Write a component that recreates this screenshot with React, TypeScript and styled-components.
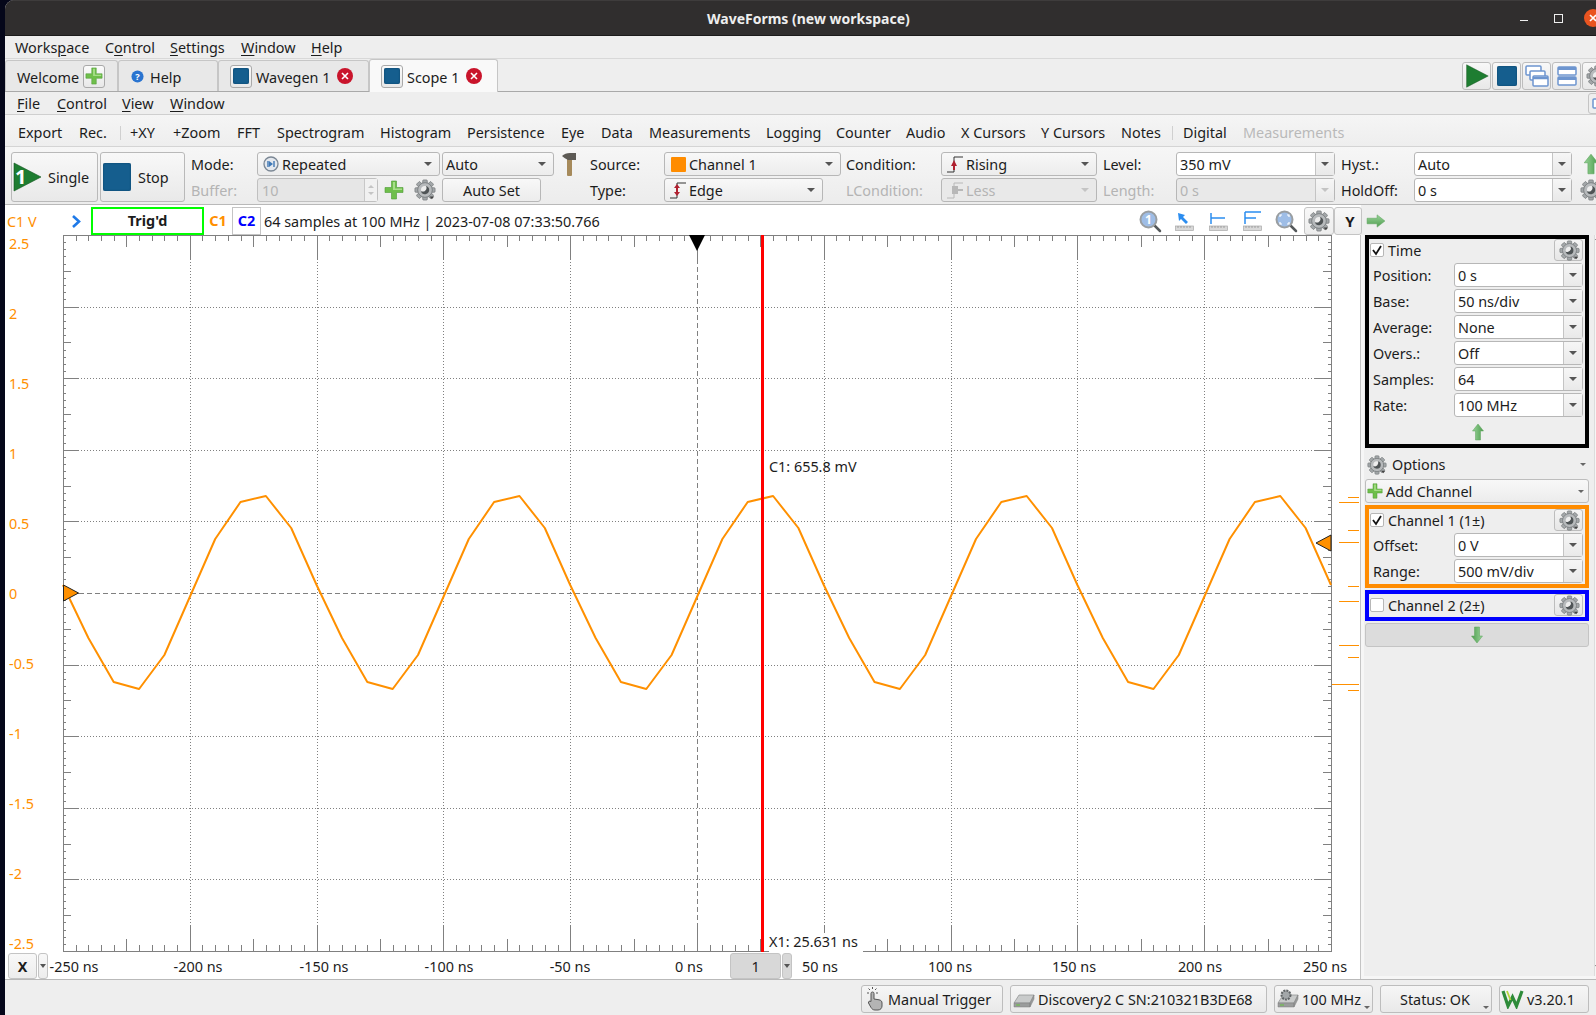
import React from 'react'
import styled, { createGlobalStyle } from 'styled-components'

const GlobalStyle = createGlobalStyle`
    html, body {
        margin: 0;
        padding: 0;
        background: #05071a;
        overflow: hidden;
    }
`

const Screen = styled.div`
    width: 1596px;
    height: 1015px;
    padding-left: 5px;
    box-sizing: border-box;
    overflow: hidden;
    background: #05071a;
`

const Window = styled.div`
    width: 1591px;
    height: 1015px;
    display: flex;
    flex-direction: column;
    overflow: hidden;
    border-top-left-radius: 9px;
    background: #eeeeee;
    color: #1c1c1c;
    font-family: 'Noto Sans', sans-serif;
    font-size: 14.4px;
`

const TitleBar = styled.div`
    flex: 0 0 36px;
    display: flex;
    align-items: center;
    padding-left: 702px;
    background: #302e2e;
    border-top: 1px solid #3e3c3c;
    box-sizing: border-box;
    border-bottom: 1px solid #1c1b1b;
`

const Title = styled.div`
    color: #eeeeee;
    font-weight: 700;
    font-size: 14px;
`

const WindowButtons = styled.div`
    margin-left: auto;
    display: flex;
    align-items: center;
`

const MinButton = styled.div`
    width: 8px;
    height: 1px;
    background: #eeeeee;
    margin-right: 26px;
    margin-top: 4px;
`

const MaxButton = styled.div`
    width: 7px;
    height: 7px;
    border: 1px solid #eeeeee;
    margin-right: 21px;
`

const CloseButton = styled.div`
    width: 18px;
    height: 18px;
    border-radius: 50%;
    background: #e95420;
    margin-right: -6px;
    display: flex;
    align-items: center;
    justify-content: center;
`

const MenuRow = styled.div<{ $h: number; $pad: number; $line: string }>`
    flex: 0 0 ${ p => p.$h }px;
    display: flex;
    align-items: center;
    box-sizing: border-box;
    padding-left: ${ p => p.$pad }px;
    border-bottom: 1px solid ${ p => p.$line };
`

const MenuItem = styled.div<{ $w: number }>`
    width: ${ p => p.$w }px;
    flex: none;
    white-space: nowrap;
    u { text-underline-offset: 2px; }
`

const CornerButton = styled.div`
    margin-left: auto;
    margin-right: -16px;
    width: 24px;
    height: 21px;
    box-sizing: border-box;
    border: 1px solid #c4c4c4;
    border-radius: 3px;
    padding: 3px;
`

const TabRow = styled.div`
    flex: 0 0 33px;
    display: flex;
    align-items: flex-end;
    box-sizing: border-box;
    border-bottom: 1px solid #a9a9a9;
`

const Tab = styled.div<{ $w: number; $pad: number; $active?: boolean }>`
    flex: none;
    width: ${ p => p.$w }px;
    height: ${ p => p.$active ? 33 : 31 }px;
    margin-bottom: ${ p => p.$active ? -1 : 0 }px;
    box-sizing: border-box;
    padding-left: ${ p => p.$pad }px;
    display: flex;
    align-items: center;
    border: 1px solid #c6c6c6;
    border-bottom: none;
    border-radius: 3px 3px 0 0;
    background: ${ p => p.$active ? '#f9f9f9' : '#e8e8e8' };
`

const TabBox = styled.div<{ $ml?: number }>`
    width: 22px;
    height: 23px;
    margin-left: ${ p => p.$ml ?? 0 }px;
    box-sizing: border-box;
    display: flex;
    align-items: center;
    justify-content: center;
    border: 1px solid #a9a9a9;
    border-radius: 3px;
    background: linear-gradient(#fbfbfb, #e8e8e8);
`

const StopSquare = styled.div<{ $size: number }>`
    width: ${ p => p.$size }px;
    height: ${ p => p.$size }px;
    flex: none;
    border-radius: 2px;
    background: #155e8e;
    box-shadow: inset 0 0 2px #0b3e62;
`

const TabLabel = styled.span<{ $ml: number }>`
    margin-left: ${ p => p.$ml }px;
    padding-top: 2px;
    white-space: nowrap;
`

const TabClose = styled.div<{ $ml: number }>`
    width: 16px;
    height: 16px;
    margin-left: ${ p => p.$ml }px;
    border-radius: 50%;
    background: #c9142b;
    display: flex;
    align-items: center;
    justify-content: center;
`

const TabTools = styled.div`
    display: flex;
    gap: 1px;
    margin-left: 964px;
    margin-bottom: 1px;
    flex: none;
`

const ToolButton = styled.div`
    width: 29px;
    height: 28px;
    box-sizing: border-box;
    display: flex;
    align-items: center;
    justify-content: center;
    border: 1px solid #bdbdbd;
    border-radius: 3px;
    background: linear-gradient(#f8f8f8, #e8e8e8);
`

const ToolStrip = styled.div`
    flex: 0 0 32px;
    display: flex;
    align-items: center;
    box-sizing: border-box;
    padding: 4px 0 0 13px;
    border-bottom: 1px solid #d4d4d4;
    background: linear-gradient(#f5f5f5, #eeeeee);
`

const ToolItem = styled.div<{ $w: number; $off?: boolean }>`
    flex: none;
    width: ${ p => p.$w }px;
    white-space: nowrap;
    color: ${ p => p.$off ? '#b9b9b9' : '#1c1c1c' };
`

const ToolSep = styled.div<{ $w: number }>`
    flex: none;
    width: ${ p => p.$w }px;
    height: 14px;
    &::before {
        content: '';
        display: block;
        width: 1px;
        height: 14px;
        background: #d0d0d0;
    }
`

const ControlBar = styled.div`
    flex: 0 0 58px;
    box-sizing: border-box;
    padding: 5px 0 0 6px;
    display: grid;
    grid-template-columns: 89px 91px 66px 185px 119px 29px 74px 182px 95px 162px 73px 165px 73px 169px 20px;
    grid-template-rows: 24px 24px;
    row-gap: 2px;
    border-bottom: 1px solid #b9b9b9;
    background: linear-gradient(#f6f6f6, #ececec);
    overflow: hidden;
`

const BigButton = styled.div<{ $w: number }>`
    grid-row: span 2;
    width: ${ p => p.$w }px;
    height: 50px;
    box-sizing: border-box;
    display: flex;
    align-items: center;
    border: 1px solid #b9b9b9;
    border-radius: 3px;
    background: linear-gradient(#f8f8f8, #e9e9e9);
`

const BigLabel = styled.span<{ $ml: number }>`
    margin-left: ${ p => p.$ml }px;
`

const FieldLabel = styled.div<{ $off?: boolean; $col?: number }>`
    display: flex;
    align-items: center;
    white-space: nowrap;
    grid-column: ${ p => p.$col ?? 'auto' };
    color: ${ p => p.$off ? '#b4b4b4' : '#1c1c1c' };
`

const ComboBox = styled.div<{ $w: number; $edit?: boolean; $off?: boolean }>`
    width: ${ p => p.$w }px;
    height: 24px;
    box-sizing: border-box;
    display: flex;
    align-items: center;
    border: 1px solid #b7b7b7;
    border-radius: 3px;
    color: ${ p => p.$off ? '#b4b4b4' : '#1c1c1c' };
    background: ${ p => p.$off
        ? '#e9e9e9'
        : p.$edit ? '#ffffff' : 'linear-gradient(#f8f8f8, #ececec)' };
`

const ComboIcon = styled.span`
    display: flex;
    margin-left: 5px;
    flex: none;
`

const ComboValue = styled.span`
    flex: 1;
    padding-left: 3px;
    white-space: nowrap;
`

const ComboArrow = styled.div<{ $edit?: boolean; $off?: boolean }>`
    flex: none;
    width: ${ p => p.$edit ? 19 : 22 }px;
    height: 100%;
    box-sizing: border-box;
    display: flex;
    align-items: center;
    justify-content: center;
    border-left: ${ p => p.$edit ? '1px solid #c4c4c4' : 'none' };
    background: ${ p => p.$edit ? 'linear-gradient(#f6f6f6, #e9e9e9)' : 'transparent' };
    &::after {
        content: '';
        border-left: 4px solid transparent;
        border-right: 4px solid transparent;
        border-top: 4px solid ${ p => p.$off ? '#c4c4c4' : '#555555' };
    }
`

const PlainButton = styled.div<{ $w: number }>`
    width: ${ p => p.$w }px;
    height: 24px;
    box-sizing: border-box;
    display: flex;
    align-items: center;
    justify-content: center;
    border: 1px solid #b7b7b7;
    border-radius: 3px;
    background: linear-gradient(#f8f8f8, #ececec);
`

const CellRow = styled.div<{ $ml?: number }>`
    display: flex;
    align-items: center;
    margin-left: ${ p => p.$ml ?? 0 }px;
`

const Spin = styled.div`
    width: 121px;
    height: 24px;
    box-sizing: border-box;
    display: flex;
    border: 1px solid #c0c0c0;
    border-radius: 3px;
    background: #e6e6e6;
    color: #b4b4b4;
    align-items: center;
    padding-left: 4px;
`

const SpinArrows = styled.div`
    margin-left: auto;
    width: 13px;
    height: 100%;
    box-sizing: border-box;
    border-left: 1px solid #c8c8c8;
    display: flex;
    flex-direction: column;
    align-items: center;
    justify-content: center;
    gap: 4px;
    background: #f1f1f1;
    &::before, &::after {
        content: '';
        border-left: 3px solid transparent;
        border-right: 3px solid transparent;
    }
    &::before { border-bottom: 3px solid #c4c4c4; }
    &::after { border-top: 3px solid #c4c4c4; }
`

const StatusRow = styled.div`
    flex: 0 0 30px;
    display: flex;
    align-items: center;
    box-sizing: border-box;
    padding-top: 2px;
    background: linear-gradient(to right, #ffffff 1356px, #eeeeee 1356px);
`

const ChannelTag = styled.div`
    width: 66px;
    flex: none;
    padding-left: 2px;
    box-sizing: border-box;
    color: #ff8f00;
`

const Chevron = styled.div`
    width: 20px;
    flex: none;
    display: flex;
`

const TrigBox = styled.div`
    width: 113px;
    height: 28px;
    flex: none;
    box-sizing: border-box;
    border: 2px solid #00ff00;
    font-weight: 700;
    text-align: center;
    line-height: 24px;
`

const ChannelTab = styled.div<{ $color: string; $w: number; $boxed?: boolean }>`
    width: ${ p => p.$w }px;
    height: 28px;
    flex: none;
    box-sizing: border-box;
    font-weight: 700;
    text-align: center;
    line-height: 26px;
    color: ${ p => p.$color };
    border: 1px solid ${ p => p.$boxed ? '#c4c4c4' : 'transparent' };
`

const SampleInfo = styled.div`
    margin-left: 3px;
    width: 875px;
    flex: none;
    white-space: nowrap;
`

const ViewIcon = styled.div<{ $w: number }>`
    width: ${ p => p.$w }px;
    flex: none;
    display: flex;
`

const SmallButton = styled.div<{ $w: number; $pad?: number }>`
    width: ${ p => p.$w }px;
    height: 28px;
    flex: none;
    box-sizing: border-box;
    display: flex;
    align-items: center;
    justify-content: center;
    padding-left: ${ p => p.$pad ?? 0 }px;
    border: 1px solid #c4c4c4;
    border-radius: 3px;
    font-weight: 700;
    font-size: 15px;
    background: linear-gradient(#f8f8f8, #ededed);
`

const ArrowCell = styled.div`
    flex: 1;
    display: flex;
    align-items: center;
    padding-left: 4px;
`

const Main = styled.div`
    flex: 0 0 745px;
    display: flex;
    border-bottom: 1px solid #b9b9b9;
    box-sizing: border-box;
`

const ScopePane = styled.div`
    width: 1356px;
    flex: none;
    display: flex;
    flex-direction: column;
    background: #ffffff;
    border-right: 1px solid #c4c4c4;
    box-sizing: border-box;
`

const PlotRow = styled.div`
    flex: 0 0 716px;
    display: flex;
`

const YAxis = styled.div`
    width: 58px;
    height: 718px;
    flex: none;
    box-sizing: border-box;
    padding-left: 4px;
    display: flex;
    flex-direction: column;
    justify-content: space-between;
    color: #ff8f00;
    line-height: 18px;
`

const PlotArea = styled.div`
    position: relative;
    flex: 1;
`

const Chart = styled.svg`
    display: block;
    overflow: visible;
`

const CursorLabel = styled.div<{ $x: number; $y: number; $cover?: boolean }>`
    position: absolute;
    left: ${ p => p.$x }px;
    top: ${ p => p.$y }px;
    white-space: nowrap;
    line-height: 18px;
    width: ${ p => p.$cover ? '94px' : 'auto' };
    height: ${ p => p.$cover ? '20px' : 'auto' };
    background: ${ p => p.$cover ? '#ffffff' : 'transparent' };
`

const XRow = styled.div`
    flex: 1;
    display: flex;
    align-items: center;
    padding-left: 3px;
`

const XButton = styled.div<{ $w: number; $bold?: boolean; $gray?: boolean; $ml?: number }>`
    flex: none;
    width: ${ p => p.$w }px;
    height: 26px;
    margin-left: ${ p => p.$ml ?? 0 }px;
    box-sizing: border-box;
    display: flex;
    align-items: center;
    justify-content: center;
    border: 1px solid #c4c4c4;
    border-radius: 3px;
    font-weight: ${ p => p.$bold ? 700 : 400 };
    background: ${ p => p.$gray ? '#d8d8d8' : 'linear-gradient(#f8f8f8, #ededed)' };
`

const DropTriangle = styled.div`
    border-left: 3px solid transparent;
    border-right: 3px solid transparent;
    border-top: 4px solid #555555;
`

const XLabel = styled.div<{ $w: number; $ml: number }>`
    flex: none;
    width: ${ p => p.$w }px;
    margin-left: ${ p => p.$ml }px;
    text-align: center;
    white-space: nowrap;
`

const Panel = styled.div`
    flex: 1;
    display: flex;
    background: #f6f6f6;
`

const PanelBody = styled.div`
    flex: none;
    width: 230px;
    height: 741px;
    margin-left: 3px;
    padding-left: 1px;
    display: flex;
    flex-direction: column;
    box-sizing: border-box;
    background: #eeeeee;
`

const ScrollTrack = styled.div`
    flex: 1;
    height: 741px;
    display: flex;
    flex-direction: column;
    justify-content: space-between;
    align-items: center;
    padding: 2px 0 8px;
    box-sizing: border-box;
    border-left: 1px solid #dcdcdc;
    &::before, &::after {
        content: '';
        border-left: 2px solid transparent;
        border-right: 2px solid transparent;
    }
    &::before { border-bottom: 3px solid #666666; }
    &::after { border-top: 3px solid #666666; }
`

const PanelBox = styled.div<{ $color: string; $h: number; $mt?: number }>`
    width: 224px;
    height: ${ p => p.$h }px;
    margin-top: ${ p => p.$mt ?? 0 }px;
    flex: none;
    box-sizing: border-box;
    border: 4px solid ${ p => p.$color };
    padding: 0 2px 0 4px;
    display: flex;
    flex-direction: column;
    gap: 2px;
`

const BoxHead = styled.div`
    height: 22px;
    flex: none;
    display: flex;
    align-items: center;
`

const CheckBox = styled.div`
    width: 14px;
    height: 14px;
    flex: none;
    box-sizing: border-box;
    border: 1px solid #b7b7b7;
    border-radius: 2px;
    background: #ffffff;
    display: flex;
    align-items: center;
    justify-content: center;
    margin-left: -3px;
`

const HeadLabel = styled.span`
    margin-left: 4px;
`

const GearButton = styled.div`
    margin-left: auto;
    width: 29px;
    height: 22px;
    box-sizing: border-box;
    display: flex;
    align-items: center;
    justify-content: center;
    padding-left: 2px;
    border: 1px solid #bdbdbd;
    border-radius: 3px;
    background: linear-gradient(#f4f4f4, #e6e6e6);
`

const PanelRow = styled.div`
    height: 24px;
    flex: none;
    display: flex;
    align-items: center;
`

const PanelLabel = styled.div`
    width: 81px;
    flex: none;
`

const CenterArrow = styled.div`
    flex: 1;
    display: flex;
    align-items: center;
    justify-content: center;
`

const OptionsRow = styled.div`
    flex: 0 0 31px;
    width: 224px;
    display: flex;
    align-items: center;
    padding: 3px 3px 1px 2px;
    box-sizing: border-box;
`

const OptionsLabel = styled.span<{ $ml: number }>`
    margin-left: ${ p => p.$ml }px;
`

const TinyDrop = styled.div`
    margin-left: auto;
    border-left: 3px solid transparent;
    border-right: 3px solid transparent;
    border-top: 3px solid #666666;
`

const AddButton = styled.div`
    flex: 0 0 24px;
    width: 224px;
    margin-bottom: 2px;
    box-sizing: border-box;
    display: flex;
    align-items: center;
    padding: 0 4px 0 1px;
    border: 1px solid #bdbdbd;
    border-radius: 3px;
    background: linear-gradient(#f8f8f8, #ececec);
`

const DownButton = styled.div`
    flex: 0 0 24px;
    width: 224px;
    margin-top: 2px;
    box-sizing: border-box;
    display: flex;
    align-items: center;
    justify-content: center;
    border: 1px solid #c4c4c4;
    border-radius: 3px;
    background: #dcdcdc;
`

const BottomBar = styled.div`
    flex: 1;
    display: flex;
    align-items: center;
    padding: 3px 0 0 856px;
    gap: 7px;
`

const BarButton = styled.div<{ $w: number; $pad: number }>`
    position: relative;
    flex: none;
    width: ${ p => p.$w }px;
    height: 28px;
    box-sizing: border-box;
    display: flex;
    align-items: center;
    padding-left: ${ p => p.$pad }px;
    gap: 3px;
    border: 1px solid #bdbdbd;
    border-radius: 3px;
    white-space: nowrap;
    background: linear-gradient(#f6f6f6, #e9e9e9);
`

const BarDrop = styled.div`
    position: absolute;
    right: 2px;
    bottom: 3px;
    border-left: 3px solid transparent;
    border-right: 3px solid transparent;
    border-top: 3px solid #666666;
`

const Plus: React.FC<{ size?: number }> = ({ size = 20 }) => (
    <svg width={ size } height={ size } viewBox="0 0 20 20">
        <path d="M7.5 1h5v6.500H19v5h-6.500V19h-5v-6.500H1v-5h6.500z" fill="#6fbf4b" stroke="#4d9a35" strokeWidth="0.6" />
        <path d="M9 2h2v6.500h7v1.500H9z" fill="#a8de8a" />
    </svg>
)

const Gear: React.FC<{ size?: number }> = ({ size = 22 }) => (
    <svg width={ size } height={ size } viewBox="0 0 24 24">
        { [0, 45, 90, 135, 180, 225, 270, 315].map(a => (
            <rect key={ a } x="9.5" y="1" width="5" height="6" rx="1" fill="#a3a7a9" stroke="#6d7173" strokeWidth="0.7" transform={ `rotate(${ a } 12 12)` } />
        )) }
        <circle cx="12" cy="12" r="8" fill="#b7babc" stroke="#7a7e80" />
        <circle cx="12" cy="12" r="4.4" fill="#eeeeee" />
        <path d="M13 7.500a4.600 4.600 0 1 1-5.500 5.500 4 4 0 0 0 5.500-5.500z" fill="#4f5456" />
        <path d="M17 19l5 0-2.500 3z" fill="#444" />
    </svg>
)

const GreenArrow: React.FC<{ dir: 'up' | 'down' | 'right'; size?: number }> = ({ dir, size = 18 }) => {
    const rotate = dir === 'up' ? 0 : dir === 'down' ? 180 : 90
    return (
        <svg width={ size } height={ size } viewBox="0 0 18 18">
            <defs>
                <linearGradient id="arrowFill" x1="0" x2="1" y1="0" y2="0">
                    <stop offset="0" stopColor="#98d498" />
                    <stop offset="1" stopColor="#4f9d4f" />
                </linearGradient>
            </defs>
            <path d="M9 1l5.500 7H11.500v9h-5V8H3.500z" fill="url(#arrowFill)" stroke="#5aa35a" strokeWidth="0.5" transform={ `rotate(${ rotate } 9 9)` } />
        </svg>
    )
}

const Play: React.FC<{ size: number; one?: boolean }> = ({ size, one }) => (
    <svg width={ size } height={ size } viewBox="0 0 30 30">
        <path d="M2 1l27 14L2 29z" fill="#1e7d31" stroke="#12561f" strokeWidth="0.6" />
        { one && <text x="3" y="22" fontSize="20" fontWeight="700" fill="#ffffff" fontFamily="'Noto Sans', sans-serif">1</text> }
    </svg>
)

const Hammer = () => (
    <svg width="17" height="25" viewBox="0 0 17 25">
        <rect x="6" y="6" width="5" height="18" rx="1" fill="#a68a5b" />
        <path d="M1 4q3-3 8-3h6v7H7Q3 6 1 4z" fill="#5d5a55" />
    </svg>
)

const Edge: React.FC<{ kind: 'rising' | 'edge' | 'less' }> = ({ kind }) => {
    const line = kind === 'less' ? '#b8b8b8' : '#333333'
    const mark = kind === 'less' ? '#b8b8b8' : '#b02030'
    return (
        <svg width="16" height="20" viewBox="0 0 16 20">
            <path d="M0 18h7V3h9" fill="none" stroke={ line } strokeWidth="1" />
            { kind === 'rising' && <path d="M7 6l3 6H8v4H6v-4H4z" fill={ mark } /> }
            { kind === 'edge' && <path d="M7 4l3 4H8v4h2l-3 4-3-4h2V8H4z" fill={ mark } /> }
            { kind === 'less' && <path d="M5 6h6v3h5v2h-5v3H5z" fill={ mark } /> }
        </svg>
    )
}

const RepeatIcon = () => (
    <svg width="16" height="16" viewBox="0 0 16 16">
        <circle cx="8" cy="8" r="7" fill="#e4e8ee" stroke="#7b8794" strokeWidth="1.300" />
        <path d="M5 5v6M11 5v6" stroke="#3f78b5" strokeWidth="1.400" />
        <path d="M6 5l4 3-4 3z" fill="#3f78b5" />
    </svg>
)

const HelpIcon = () => (
    <svg width="13" height="13" viewBox="0 0 14 14">
        <circle cx="7" cy="7" r="6.500" fill="#2a74d0" />
        <text x="7" y="10.500" fontSize="10" fontWeight="700" textAnchor="middle" fill="#fff" fontFamily="'Noto Sans', sans-serif">?</text>
    </svg>
)

const CrossMark: React.FC<{ size: number }> = ({ size }) => (
    <svg width={ size } height={ size } viewBox="0 0 10 10">
        <path d="M2 2l6 6M8 2l-6 6" stroke="#ffffff" strokeWidth="1.600" />
    </svg>
)

const Magnifier: React.FC<{ one?: boolean }> = ({ one }) => (
    <svg width="23" height="23" viewBox="0 0 23 23">
        <path d="M14 14l7 7" stroke="#55595b" strokeWidth="2.500" strokeLinecap="round" />
        <circle cx="9.500" cy="9.500" r="8" fill="#9ebde6" stroke="#9a9ea1" strokeWidth="2" />
        { one
            ? <text x="9.500" y="14" fontSize="12" fontWeight="700" textAnchor="middle" fill="#fff" fontFamily="'Noto Sans', sans-serif">1</text>
            : <path d="M5 7V5h2M12 5h2v2M14 12v2h-2M7 14H5v-2" fill="none" stroke="#ffffff" strokeWidth="1.200" /> }
    </svg>
)

const RulerIcon: React.FC<{ kind: number }> = ({ kind }) => (
    <svg width="19" height="22" viewBox="0 0 19 22">
        <rect x="0.500" y="16" width="18" height="4.500" fill="#d8d8d8" stroke="#a8a8a8" strokeWidth="0.700" />
        <path d="M3 16v2M6 16v2M9 16v2M12 16v2M15 16v2" stroke="#8a8a8a" strokeWidth="0.700" />
        { kind === 0 && <path d="M3 3l7 2-2 2 5 5-2 2-5-5-2 2z" fill="#2b8df0" /> }
        { kind === 1 && <path d="M2 3v11M2 8h14" stroke="#2b8df0" strokeWidth="1.500" fill="none" /> }
        { kind === 2 && <path d="M2 2v12M2 2h16M2 8h11" stroke="#2b8df0" strokeWidth="1.500" fill="none" /> }
    </svg>
)

const WindowsIcon: React.FC<{ split?: boolean }> = ({ split }) => (
    <svg width="24" height="24" viewBox="0 0 24 24">
        { split
            ? <>
                <rect x="3" y="3" width="18" height="8" rx="1" fill="#ffffff" stroke="#6d95cf" strokeWidth="1.500" />
                <rect x="3" y="13" width="18" height="8" rx="1" fill="#ffffff" stroke="#6d95cf" strokeWidth="1.500" />
                <path d="M3 4.500h18M3 14.500h18" stroke="#6d95cf" strokeWidth="3" />
            </>
            : <>
                <rect x="1" y="2" width="15" height="9" rx="1" fill="#ffffff" stroke="#6d95cf" strokeWidth="1.500" />
                <rect x="5" y="7" width="15" height="9" rx="1" fill="#ffffff" stroke="#6d95cf" strokeWidth="1.500" />
                <rect x="8" y="12" width="15" height="10" rx="1" fill="#ffffff" stroke="#6d95cf" strokeWidth="1.500" />
                <path d="M8 14h15" stroke="#6d95cf" strokeWidth="2.500" />
            </> }
    </svg>
)

const DeviceIcon: React.FC<{ gear?: boolean }> = ({ gear }) => (
    <svg width="22" height="20" viewBox="0 0 22 20">
        <path d="M1 14l5-8h15l-4 8z" fill="#c9cbcb" stroke="#8a8c8c" strokeWidth="0.700" />
        <path d="M1 14h16v4H1zM17 14l4-8v4l-4 8z" fill="#9a9c9c" stroke="#7d7f7f" strokeWidth="0.500" />
        <path d="M3 16h4" stroke="#6fbf4b" strokeWidth="1.200" />
        { gear && <circle cx="9" cy="6" r="4.500" fill="#a3a7a9" stroke="#5f6365" strokeWidth="2" strokeDasharray="2 1" /> }
    </svg>
)

const HandIcon = () => (
    <svg width="18" height="24" viewBox="0 0 18 24">
        <path d="M3 3L1.500 1.500M8 3l1.500-1.500M5.500 2V0M2 6H0M9 6h2" stroke="#555555" strokeWidth="1" />
        <path d="M4 14V6.500a1.500 1.500 0 0 1 3 0V12l5 .8c2 .4 3 1.500 3 3.200v3c0 2-1.500 4-4 4H8c-2 0-3-1-4-2.500L1.500 16c-.6-1.500 1.200-2.500 2.500-1.500z" fill="#b4b4b4" stroke="#555555" strokeWidth="1" />
    </svg>
)

const Logo = () => (
    <svg width="23" height="20" viewBox="0 0 23 20">
        <path d="M2 2l5 15 4.500-9 4 9L21 2" fill="none" stroke="#2e8b3a" strokeWidth="3.200" />
        <path d="M6 2l3.500 9" fill="none" stroke="#b5d63a" strokeWidth="1.800" />
    </svg>
)

const Check = () => (
    <svg width="12" height="12" viewBox="0 0 12 12">
        <path d="M2 6l3 4 5-8" fill="none" stroke="#111111" strokeWidth="1.800" />
    </svg>
)

const OrangeSwatch = () => (
    <svg width="16" height="15" viewBox="0 0 16 15">
        <rect x="1" width="15" height="15" rx="1" fill="#ff8c00" />
    </svg>
)

const TOOLS: { label: string; x: number; off?: boolean; sep?: boolean }[] = [
    { label: 'Export', x: 18 },
    { label: 'Rec.', x: 79 },
    { label: '', x: 120, sep: true },
    { label: '+XY', x: 130 },
    { label: '+Zoom', x: 173 },
    { label: 'FFT', x: 237 },
    { label: 'Spectrogram', x: 277 },
    { label: 'Histogram', x: 380 },
    { label: 'Persistence', x: 467 },
    { label: 'Eye', x: 561 },
    { label: 'Data', x: 601 },
    { label: 'Measurements', x: 649 },
    { label: 'Logging', x: 766 },
    { label: 'Counter', x: 836 },
    { label: 'Audio', x: 906 },
    { label: 'X Cursors', x: 961 },
    { label: 'Y Cursors', x: 1041 },
    { label: 'Notes', x: 1121 },
    { label: '', x: 1172, sep: true },
    { label: 'Digital', x: 1183 },
    { label: 'Measurements', x: 1243, off: true },
    { label: '', x: 1400, sep: true },
]

const Y_LABELS = ['2.5', '2', '1.5', '1', '0.5', '0', '-0.5', '-1', '-1.5', '-2', '-2.5']

const TIME_ROWS: [string, string][] = [
    ['Position:', '0 s'],
    ['Base:', '50 ns/div'],
    ['Average:', 'None'],
    ['Overs.:', 'Off'],
    ['Samples:', '64'],
    ['Rate:', '100 MHz'],
]

// x axis labels left of the "1" button, then right of it
const X_LEFT: [string, number, number][] = [
    ['-250 ns', 52, 0],
    ['-200 ns', 76, 60],
    ['-150 ns', 76, 50],
    ['-100 ns', 76, 49],
    ['-50 ns', 76, 45],
    ['0 ns', 76, 43],
]

const X_RIGHT: [string, number, number][] = [
    ['50 ns', 54, 1],
    ['100 ns', 76, 65],
    ['150 ns', 76, 48],
    ['200 ns', 76, 50],
    ['250 ns', 76, 49],
]

const PLOT_W = 1268
const PLOT_H = 716

const crisp = (v: number) => Math.round(v) + 0.5

const buildTicks = () => {
    let d = ''
    for (let i = 0; i <= 100; i++) {
        const x = crisp(i * PLOT_W / 100)
        const len = i % 10 === 0 ? 25 : i % 5 === 0 ? 12 : 6
        d += `M${ x } 0v${ len }M${ x } ${ PLOT_H }v-${ len }`
    }
    for (let i = 0; i <= 100; i++) {
        const y = crisp(i * PLOT_H / 100)
        const len = i % 10 === 0 ? 16 : i % 5 === 0 ? 8 : 3
        d += `M0 ${ y }h${ len }M${ PLOT_W } ${ y }h-${ len }`
    }
    return d
}

const buildGrid = (center: boolean) => {
    let d = ''
    for (let i = 1; i < 10; i++) {
        if ((i === 5) !== center) continue
        const x = crisp(i * PLOT_W / 10)
        const y = crisp(i * PLOT_H / 10)
        d += `M${ x } 0V${ PLOT_H }M0 ${ y }H${ PLOT_W }`
    }
    return d
}

// one period of the captured sine, absolute pixel height inside the plot
const PERIOD = [362, 304, 267, 261, 293, 350, 403, 447, 454, 420]

const buildWave = () => {
    const points: string[] = []
    for (let i = 0; i <= 50; i++) {
        const y = PERIOD[(i + 5) % 10]
        points.push(`${ (i * PLOT_W / 50).toFixed(1) },${ y }`)
    }
    return points.join(' ')
}

const SIDE_TICKS: [number, number][] = [
    [262, 1285], [267, 1276], [295, 1285], [307, 1276], [351, 1285],
    [366, 1276], [410, 1276], [422, 1285], [449, 1269], [455, 1285],
]

const Plot = () => (
    <Chart width={ 1292 } height={ PLOT_H + 2 }>
        <path d={ buildGrid(false) } stroke="#808080" strokeWidth="1" strokeDasharray="1 2" fill="none" shapeRendering="crispEdges" />
        <path d={ buildGrid(true) } stroke="#808080" strokeWidth="1" strokeDasharray="5 3" fill="none" shapeRendering="crispEdges" />
        <rect x="0.5" y="0.5" width={ PLOT_W } height={ PLOT_H } fill="none" stroke="#808080" shapeRendering="crispEdges" />
        <path d={ buildTicks() } stroke="#808080" fill="none" shapeRendering="crispEdges" />
        <polyline points={ buildWave() } fill="none" stroke="#ff9000" strokeWidth="2" strokeLinejoin="round" />
        { SIDE_TICKS.map(([y, x]) => (
            <path key={ y } d={ `M${ x } ${ y + 0.5 }H1296` } stroke="#ff9000" strokeWidth="1" shapeRendering="crispEdges" />
        )) }
        <path d="M626 0h16l-8 16z" fill="#000000" />
        <path d="M0.5 350l15 8-15 8z" fill="#ff9000" stroke="#222222" strokeWidth="1" />
        <path d="M1268 300l-15 8 15 8z" fill="#ff9000" stroke="#222222" strokeWidth="1" />
        <rect x="698" y="0" width="3" height={ PLOT_H + 1 } fill="#ff0000" />
    </Chart>
)

interface ComboProps {
    w: number;
    value: string;
    edit?: boolean;
    off?: boolean;
    icon?: React.ReactNode;
}

const Combo: React.FC<ComboProps> = ({ w, value, edit, off, icon }) => (
    <ComboBox $w={ w } $edit={ edit } $off={ off }>
        { icon && <ComboIcon>{ icon }</ComboIcon> }
        <ComboValue>{ value }</ComboValue>
        <ComboArrow $edit={ edit } $off={ off } />
    </ComboBox>
)

const App: React.FC = () => {
    return (
        <Screen>
            <GlobalStyle />
            <Window>
                <TitleBar>
                    <Title>WaveForms (new workspace)</Title>
                    <WindowButtons>
                        <MinButton />
                        <MaxButton />
                        <CloseButton><CrossMark size={ 10 } /></CloseButton>
                    </WindowButtons>
                </TitleBar>

                <MenuRow $h={ 23 } $pad={ 10 } $line="#d8d8d8">
                    <MenuItem $w={ 90 }>Works<u>p</u>ace</MenuItem>
                    <MenuItem $w={ 65 }>C<u>o</u>ntrol</MenuItem>
                    <MenuItem $w={ 71 }><u>S</u>ettings</MenuItem>
                    <MenuItem $w={ 70 }><u>W</u>indow</MenuItem>
                    <MenuItem $w={ 50 }><u>H</u>elp</MenuItem>
                </MenuRow>

                <TabRow>
                    <Tab $w={ 113 } $pad={ 11 }>
                        <TabLabel $ml={ 0 }>Welcome</TabLabel>
                        <TabBox $ml={ 4 }><Plus size={ 18 } /></TabBox>
                    </Tab>
                    <Tab $w={ 100 } $pad={ 12 }>
                        <HelpIcon />
                        <TabLabel $ml={ 6 }>Help</TabLabel>
                    </Tab>
                    <Tab $w={ 151 } $pad={ 11 }>
                        <TabBox><StopSquare $size={ 16 } /></TabBox>
                        <TabLabel $ml={ 4 }>Wavegen 1</TabLabel>
                        <TabClose $ml={ 7 }><CrossMark size={ 10 } /></TabClose>
                    </Tab>
                    <Tab $w={ 129 } $pad={ 11 } $active>
                        <TabBox><StopSquare $size={ 16 } /></TabBox>
                        <TabLabel $ml={ 4 }>Scope 1</TabLabel>
                        <TabClose $ml={ 7 }><CrossMark size={ 10 } /></TabClose>
                    </Tab>
                    <TabTools>
                        <ToolButton><Play size={ 24 } /></ToolButton>
                        <ToolButton><StopSquare $size={ 20 } /></ToolButton>
                        <ToolButton><WindowsIcon /></ToolButton>
                        <ToolButton><WindowsIcon split /></ToolButton>
                        <ToolButton><Gear /></ToolButton>
                    </TabTools>
                </TabRow>

                <MenuRow $h={ 23 } $pad={ 12 } $line="#cfcfcf">
                    <MenuItem $w={ 40 }><u>F</u>ile</MenuItem>
                    <MenuItem $w={ 65 }><u>C</u>ontrol</MenuItem>
                    <MenuItem $w={ 48 }><u>V</u>iew</MenuItem>
                    <MenuItem $w={ 60 }><u>W</u>indow</MenuItem>
                    <CornerButton><WindowsIcon /></CornerButton>
                </MenuRow>

                <ToolStrip>
                    { TOOLS.slice(0, -1).map((t, i) => t.sep
                        ? <ToolSep key={ i } $w={ TOOLS[i + 1].x - t.x } />
                        : <ToolItem key={ i } $w={ TOOLS[i + 1].x - t.x } $off={ t.off }>{ t.label }</ToolItem>
                    ) }
                </ToolStrip>

                <ControlBar>
                    <BigButton $w={ 87 }>
                        <Play size={ 30 } one />
                        <BigLabel $ml={ 6 }>Single</BigLabel>
                    </BigButton>
                    <BigButton $w={ 85 }>
                        <BigLabel $ml={ 2 } />
                        <StopSquare $size={ 28 } />
                        <BigLabel $ml={ 7 }>Stop</BigLabel>
                    </BigButton>
                    <FieldLabel>Mode:</FieldLabel>
                    <Combo w={ 183 } value="Repeated" icon={ <RepeatIcon /> } />
                    <Combo w={ 112 } value="Auto" />
                    <CellRow><Hammer /></CellRow>
                    <FieldLabel>Source:</FieldLabel>
                    <Combo w={ 177 } value="Channel 1" icon={ <OrangeSwatch /> } />
                    <FieldLabel>Condition:</FieldLabel>
                    <Combo w={ 156 } value="Rising" icon={ <Edge kind="rising" /> } />
                    <FieldLabel>Level:</FieldLabel>
                    <Combo w={ 159 } value="350 mV" edit />
                    <FieldLabel>Hyst.:</FieldLabel>
                    <Combo w={ 158 } value="Auto" edit />
                    <CellRow $ml={ -3 }><GreenArrow dir="up" size={ 22 } /></CellRow>

                    <FieldLabel $off $col={ 3 }>Buffer:</FieldLabel>
                    <CellRow>
                        <Spin>10<SpinArrows /></Spin>
                        <CellRow $ml={ 6 }><Plus size={ 20 } /></CellRow>
                        <CellRow $ml={ 10 }><Gear /></CellRow>
                    </CellRow>
                    <PlainButton $w={ 99 }>Auto Set</PlainButton>
                    <div />
                    <FieldLabel>Type:</FieldLabel>
                    <Combo w={ 159 } value="Edge" icon={ <Edge kind="edge" /> } />
                    <FieldLabel $off>LCondition:</FieldLabel>
                    <Combo w={ 156 } value="Less" off icon={ <Edge kind="less" /> } />
                    <FieldLabel $off>Length:</FieldLabel>
                    <Combo w={ 159 } value="0 s" edit off />
                    <FieldLabel>HoldOff:</FieldLabel>
                    <Combo w={ 158 } value="0 s" edit />
                    <CellRow $ml={ -3 }><Gear /></CellRow>
                </ControlBar>

                <StatusRow>
                    <ChannelTag>C1 V</ChannelTag>
                    <Chevron>
                        <svg width="11" height="13" viewBox="0 0 11 13">
                            <path d="M2 1l6 5.500-6 5.500" fill="none" stroke="#1f7ae8" strokeWidth="2.600" />
                        </svg>
                    </Chevron>
                    <TrigBox>Trig'd</TrigBox>
                    <ChannelTab $color="#ff8f00" $w={ 28 }>C1</ChannelTab>
                    <ChannelTab $color="#0000ff" $w={ 29 } $boxed>C2</ChannelTab>
                    <SampleInfo>64 samples at 100 MHz | 2023-07-08 07:33:50.766</SampleInfo>
                    <ViewIcon $w={ 36 }><Magnifier one /></ViewIcon>
                    <ViewIcon $w={ 34 }><RulerIcon kind={ 0 } /></ViewIcon>
                    <ViewIcon $w={ 34 }><RulerIcon kind={ 1 } /></ViewIcon>
                    <ViewIcon $w={ 32 }><RulerIcon kind={ 2 } /></ViewIcon>
                    <ViewIcon $w={ 29 }><Magnifier /></ViewIcon>
                    <SmallButton $w={ 30 }><Gear /></SmallButton>
                    <SmallButton $w={ 28 } $pad={ 4 }>Y</SmallButton>
                    <ArrowCell><GreenArrow dir="right" size={ 20 } /></ArrowCell>
                </StatusRow>

                <Main>
                    <ScopePane>
                        <PlotRow>
                            <YAxis>
                                { Y_LABELS.map(l => <div key={ l }>{ l }</div>) }
                            </YAxis>
                            <PlotArea>
                                <Plot />
                                <CursorLabel $x={ 706 } $y={ 223 }>C1: 655.8 mV</CursorLabel>
                                <CursorLabel $x={ 706 } $y={ 698 } $cover>X1: 25.631 ns</CursorLabel>
                            </PlotArea>
                        </PlotRow>
                        <XRow>
                            <XButton $w={ 29 } $bold>X</XButton>
                            <XButton $w={ 10 } $ml={ 1 }><DropTriangle /></XButton>
                            { X_LEFT.map(([l, w, ml]) => <XLabel key={ l } $w={ w } $ml={ ml }>{ l }</XLabel>) }
                            <XButton $w={ 51 } $ml={ 3 } $gray>1</XButton>
                            <XButton $w={ 10 } $ml={ 1 } $gray><DropTriangle /></XButton>
                            { X_RIGHT.map(([l, w, ml]) => <XLabel key={ l } $w={ w } $ml={ ml }>{ l }</XLabel>) }
                        </XRow>
                    </ScopePane>

                    <Panel>
                        <PanelBody>
                            <PanelBox $color="#000000" $h={ 213 }>
                                <BoxHead>
                                    <CheckBox><Check /></CheckBox>
                                    <HeadLabel>Time</HeadLabel>
                                    <GearButton><Gear size={ 21 } /></GearButton>
                                </BoxHead>
                                { TIME_ROWS.map(([label, value]) => (
                                    <PanelRow key={ label }>
                                        <PanelLabel>{ label }</PanelLabel>
                                        <Combo w={ 129 } value={ value } edit />
                                    </PanelRow>
                                )) }
                                <CenterArrow><GreenArrow dir="up" /></CenterArrow>
                            </PanelBox>
                            <OptionsRow>
                                <Gear size={ 20 } />
                                <OptionsLabel $ml={ 5 }>Options</OptionsLabel>
                                <TinyDrop />
                            </OptionsRow>
                            <AddButton>
                                <Plus size={ 16 } />
                                <OptionsLabel $ml={ 3 }>Add Channel</OptionsLabel>
                                <TinyDrop />
                            </AddButton>
                            <PanelBox $color="#ff8c00" $h={ 83 }>
                                <BoxHead>
                                    <CheckBox><Check /></CheckBox>
                                    <HeadLabel>Channel 1 (1±)</HeadLabel>
                                    <GearButton><Gear size={ 21 } /></GearButton>
                                </BoxHead>
                                <PanelRow>
                                    <PanelLabel>Offset:</PanelLabel>
                                    <Combo w={ 129 } value="0 V" edit />
                                </PanelRow>
                                <PanelRow>
                                    <PanelLabel>Range:</PanelLabel>
                                    <Combo w={ 129 } value="500 mV/div" edit />
                                </PanelRow>
                            </PanelBox>
                            <PanelBox $color="#0000ff" $h={ 31 } $mt={ 2 }>
                                <BoxHead>
                                    <CheckBox />
                                    <HeadLabel>Channel 2 (2±)</HeadLabel>
                                    <GearButton><Gear size={ 21 } /></GearButton>
                                </BoxHead>
                            </PanelBox>
                            <DownButton><GreenArrow dir="down" /></DownButton>
                        </PanelBody>
                        <ScrollTrack />
                    </Panel>
                </Main>

                <BottomBar>
                    <BarButton $w={ 142 } $pad={ 5 }><HandIcon />Manual Trigger</BarButton>
                    <BarButton $w={ 257 } $pad={ 2 }><DeviceIcon />Discovery2 C SN:210321B3DE68</BarButton>
                    <BarButton $w={ 99 } $pad={ 2 }><DeviceIcon gear />100 MHz<BarDrop /></BarButton>
                    <BarButton $w={ 112 } $pad={ 19 }>Status: OK<BarDrop /></BarButton>
                    <BarButton $w={ 90 } $pad={ 1 }><Logo />v3.20.1</BarButton>
                </BottomBar>
            </Window>
        </Screen>
    )
}

export default App
